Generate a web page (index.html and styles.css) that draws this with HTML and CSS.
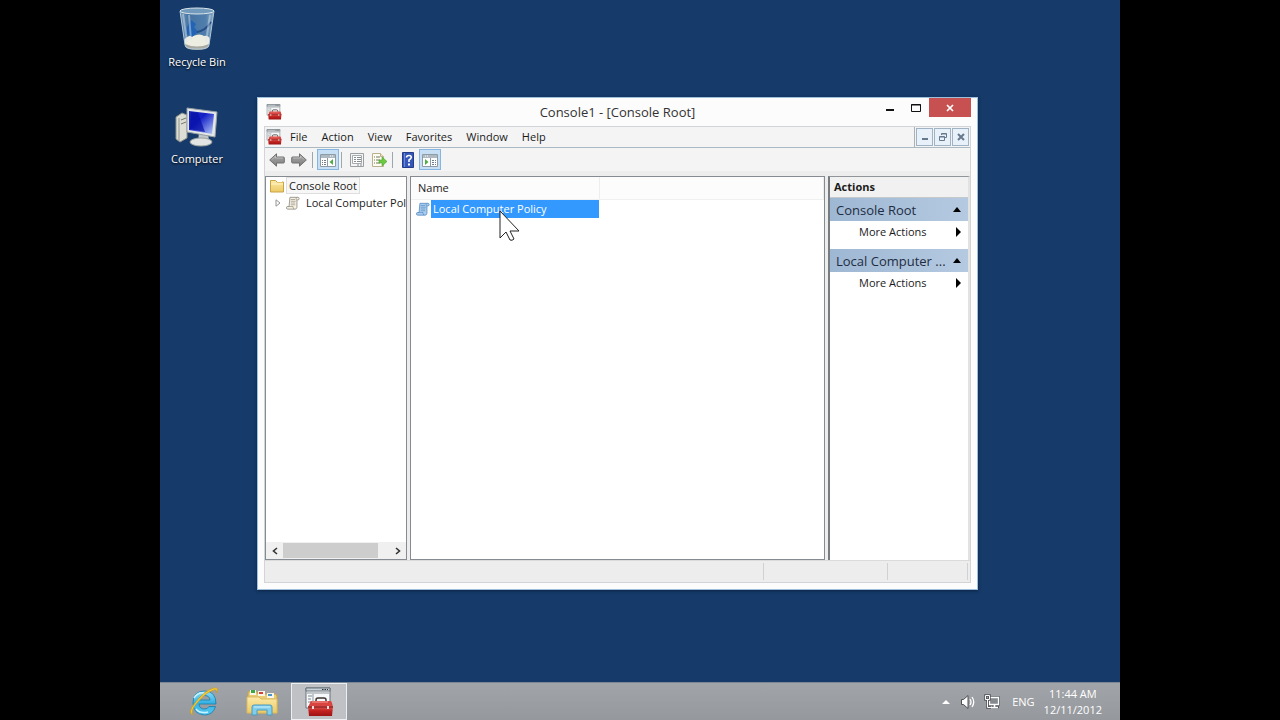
FILE: index.html
```html
<!DOCTYPE html>
<html lang="en">
<head>
<meta charset="utf-8">
<title>Console1 - [Console Root]</title>
<link rel="stylesheet" href="styles.css">
</head>
<body>
<svg class="defs" aria-hidden="true">
  <defs>
    <linearGradient id="red" x1="0" y1="0" x2="0" y2="1"><stop offset="0" stop-color="#e0625c"/><stop offset=".5" stop-color="#c2201f"/><stop offset="1" stop-color="#9c1414"/></linearGradient>
    <linearGradient id="glass" x1="0" y1="0" x2="1" y2="0"><stop offset="0" stop-color="#8fb1cd"/><stop offset=".25" stop-color="#4f80b0"/><stop offset=".75" stop-color="#5f8fbd"/><stop offset="1" stop-color="#a9c6dc"/></linearGradient>
    <linearGradient id="screen" x1="0" y1="0" x2="1" y2="1"><stop offset="0" stop-color="#1b2bb5"/><stop offset=".4" stop-color="#1420c8"/><stop offset="1" stop-color="#b8cdf8"/></linearGradient>
    <linearGradient id="grey" x1="0" y1="0" x2="0" y2="1"><stop offset="0" stop-color="#a8a8a8"/><stop offset="1" stop-color="#808080"/></linearGradient>
    <linearGradient id="yellow" x1="0" y1="0" x2="0" y2="1"><stop offset="0" stop-color="#fbeaa8"/><stop offset="1" stop-color="#ecc964"/></linearGradient>
    <linearGradient id="ie" x1="0" y1="0" x2="0" y2="1"><stop offset="0" stop-color="#8fdcf6"/><stop offset=".5" stop-color="#35b2e4"/><stop offset="1" stop-color="#58c8f0"/></linearGradient>
    <symbol id="toolbox" viewBox="0 0 28 30">
      <path d="M1 1h24v20H1z" fill="#f6f8f9" stroke="#69737a"/>
      <path d="M1 1h24v3H1z" fill="#c9d2d8" stroke="#69737a"/>
      <path d="M17 2.500h6" stroke="#333" stroke-dasharray="1.500 1"/>
      <path d="M2 6h22M8 7v13" stroke="#8b969d"/><path d="M3 9h4M3 12h3M3 15h4" stroke="#7c8890"/>
      <path d="M11 15v-2q0-2 2-2h6q2 0 2 2v2" fill="none" stroke="#3d3535" stroke-width="1.500"/>
      <path d="M5 16q0-2 2-2h18q2 0 2 2l1 4H3z" fill="#d94540"/>
      <path d="M3 19h25l-1 10H4z" fill="url(#red)"/>
      <path d="M3 20h25" stroke="#741010"/><path d="M8 19v3M23 19v3" stroke="#f5dada" stroke-width="2"/><path d="M7 15h16" stroke="#f39b93"/>
    </symbol>
    <symbol id="scroll" viewBox="0 0 16 16">
      <path d="M4.500 1.500h9q1.500 0 1.500 1.500t-1.500 1.500h-1V13q-.5 2-2 2H2q-1.500 0-1.500-1.500T2 12h1.500z" fill="var(--paper)" stroke="var(--edge)"/>
      <path d="M12.500 4.500q-1-.5-1-1.500t1.500-1.500M2 12h6q0 2 1 3M5.500 4h5M5.500 6h5.500M5.500 8h5M5.500 10h5" fill="none" stroke="var(--edge)" stroke-width=".8"/>
    </symbol>
    <symbol id="arrow" viewBox="0 0 16 14"><path d="M.7 7 7.500.8V4h7q.8 0 .8.800v4.400q0 .8-.8.800h-7v3.200z" fill="url(#grey)" stroke="#707070"/><path d="M3 6.500 6.500 3v2h7.500" fill="none" stroke="#c4c4c4" stroke-width=".8"/></symbol>
    <symbol id="panes" viewBox="0 0 16 14">
      <path d="M.5 1.500h15v12H.5z" fill="#fff" stroke="#8c9ba6"/><path d="M1 2h14v3H1z" fill="#aeb9c1"/><path d="M10 3h4" stroke="#fff" stroke-dasharray="1 1"/><path d="M7.500 5v8" stroke="#8c9ba6"/>
      <path d="M2 7.500h4M2 9.500h4M2 11.500h4" stroke="#6e7f8b" stroke-dasharray="1 1 2"/><path d="M13 6v6L9.500 9z" fill="#4fae43"/>
    </symbol>
  </defs>
</svg>

<main class="desktop">
  <div class="workspace">
    <nav class="shortcuts" aria-label="Desktop">
      <button class="shortcut">
        <svg width="48" height="48" viewBox="0 0 48 48" aria-hidden="true">
          <path d="M7 4 12 39q0 4 12 4t12-4L41 4z" fill="url(#glass)" fill-opacity=".8"/>
          <path d="M11 34q4-5 9-4 7-3 11 0 4-1 6 3l-1 6q-1 4-12 4t-12-4z" fill="#eeede2"/>
          <path d="M12 38q12 5 24 0v2q-1 4-12 4t-12-4z" fill="#a9a9a2"/>
          <path d="M14 21l4-7 5 4-2 3 4 5-6 5-5-3z" fill="#2263b5"/><path d="M24 26q8-1 14-10" fill="none" stroke="#284e87" stroke-width="2"/>
          <path d="M10 8 14 36M16 9l2 25M37 9l-4 27" stroke="#d6e5f0" stroke-opacity=".45" stroke-width="2"/>
          <ellipse cx="24" cy="5" rx="17" ry="3" fill="#719abc" stroke="#dce6ea"/>
          <path d="m7 5 5 34q0 4 12 4t12-4l5-34" fill="none" stroke="#b1c8d8"/>
        </svg>
        <span>Recycle Bin</span>
      </button>
      <button class="shortcut">
        <svg width="48" height="48" viewBox="0 0 48 48" aria-hidden="true">
          <path d="m3 14 6-4 5 2v23l-7 4-4-3z" fill="#dcddd5" stroke="#8e938f"/><path d="m6 15v23" stroke="#929790"/><path d="M8 17l5-2M8 21l5-2" stroke="#77796f"/>
          <path d="M26 30h9l1 8H25z" fill="#bfc4c5"/><ellipse cx="28" cy="39" rx="11" ry="4" fill="#e1e4e2" stroke="#9ca2a3"/>
          <path d="m14 5 30 4-2 25-28-5z" fill="#e4e7e7" stroke="#979fa4"/>
          <path d="m16 8 25 3-2 20-23-4z" fill="url(#screen)"/><path d="m18 9 7 1 7 19-15-3z" fill="#0710a5" fill-opacity=".7"/>
        </svg>
        <span>Computer</span>
      </button>
    </nav>

    <section class="window" aria-label="Console1">
      <header class="titlebar">
        <svg class="app-icon" aria-hidden="true"><use href="#toolbox"/></svg>
        <h1>Console1 - [Console Root]</h1>
        <div class="caption-buttons">
          <button aria-label="Minimize"><svg width="10" height="10" aria-hidden="true"><path d="M1 6h8v2H1z" fill="#111"/></svg></button>
          <button aria-label="Maximize"><svg width="10" height="10" aria-hidden="true"><path d="M.5 1.500h9v7h-9zM0 2h10" fill="none" stroke="#111"/></svg></button>
          <button class="close" aria-label="Close"><svg width="10" height="10" aria-hidden="true"><path d="m2 2 6 6m0-6L2 8" stroke="#fff" stroke-width="1.700"/></svg></button>
        </div>
      </header>

      <div class="frame">
        <div class="menubar">
          <svg class="app-icon" aria-hidden="true"><use href="#toolbox"/></svg>
          <nav class="menus" aria-label="Menu">
            <button>File</button><button>Action</button><button>View</button><button>Favorites</button><button>Window</button><button>Help</button>
          </nav>
          <div class="child-buttons">
            <button aria-label="Minimize console"><svg width="10" height="10" aria-hidden="true"><path d="M2 6h6v2H2z" fill="#66798d"/></svg></button>
            <button aria-label="Restore console"><svg width="10" height="10" aria-hidden="true"><path d="M3.500 3V1.500h5v4H7M1.500 4.500h5v4h-5zM1.500 5h5M3.500 2h5" fill="none" stroke="#66798d"/></svg></button>
            <button aria-label="Close console"><svg width="10" height="10" aria-hidden="true"><path d="m2 2 6 6m0-6L2 8" stroke="#66798d" stroke-width="2"/></svg></button>
          </div>
        </div>

        <div class="toolbar">
          <button class="tool" aria-label="Back"><svg width="16" height="14" aria-hidden="true"><use href="#arrow"/></svg></button>
          <button class="tool" aria-label="Forward"><svg class="flip" width="16" height="14" aria-hidden="true"><use href="#arrow"/></svg></button>
          <span class="divider"></span>
          <button class="tool pressed" aria-label="Show/Hide Console Tree"><svg width="16" height="14" aria-hidden="true"><use href="#panes"/></svg></button>
          <span class="divider"></span>
          <button class="tool" aria-label="Properties"><svg width="16" height="16" viewBox="0 0 16 16" aria-hidden="true"><path d="M1.500 1.500h13v13h-13z" fill="#f5f5f5" stroke="#9a9fa2"/><path d="M3.500 3.500h9v8h-9z" fill="#fff" stroke="#a5abae"/><path d="M5 5.500h2m1 0h4M5 7.500h2m1 0h4M5 9.500h2m1 0h4M8 13h2m1 0h2" stroke="#858d91"/></svg></button>
          <button class="tool" aria-label="Export List"><svg width="16" height="16" viewBox="0 0 16 16" aria-hidden="true"><path d="M1.500 1.500h8l3 3v10h-11z" fill="#fffdf1" stroke="#b9b18d"/><path d="M9.500 1.500v3h3" fill="#eee5bd" stroke="#b9b18d"/><path d="M3 5h1m1 0h4M3 8h1m1 0h4M3 11h1m1 0h4" stroke="#6d7665"/><path d="M8 8h3V5l5 4.500-5 4.500v-3H8z" fill="#6cc941" stroke="#4ea42b" stroke-width=".6"/></svg></button>
          <span class="divider"></span>
          <button class="tool" aria-label="Help"><svg width="16" height="16" viewBox="0 0 16 16" aria-hidden="true"><path d="M2.500.5h11v15h-11z" fill="#3557b7" stroke="#243c8b"/><path d="M4.500 1v14" stroke="#6d89dc"/><path d="M6.500 5.500Q6.500 3.500 9 3.500t2.200 2.200Q11 7 9 8v2" fill="none" stroke="#fff" stroke-width="1.600"/><path d="M8 11.500h2v2H8z" fill="#fff"/></svg></button>
          <button class="tool pressed" aria-label="Show/Hide Action Pane"><svg class="flip" width="16" height="14" aria-hidden="true"><use href="#panes"/></svg></button>
        </div>

        <div class="panes">
          <aside class="tree">
            <ul>
              <li class="root"><svg width="16" height="16" viewBox="0 0 16 16" aria-hidden="true"><path d="M1.500 4V2.500h5L8 4h6.500v10h-13z" fill="url(#yellow)" stroke="#c9a444"/><path d="M2 6h12" stroke="#fff4c5"/><path d="M8 3h5v1H8" fill="#fff"/></svg><button class="node selected">Console Root</button></li>
              <li class="child"><button class="expander" aria-label="Expand"><svg width="6" height="8" aria-hidden="true"><path d="M1 .8 5 4 1 7.200z" fill="#fff" stroke="#949494"/></svg></button><svg class="scroll-icon" width="14" height="14" aria-hidden="true"><use href="#scroll"/></svg><button class="node">Local Computer Policy</button></li>
            </ul>
            <div class="hscroll">
              <button aria-label="Scroll left"><svg width="8" height="8" aria-hidden="true"><path d="M6 1 2.500 4 6 7" fill="none" stroke="#333" stroke-width="1.600"/></svg></button>
              <div class="track"><div class="thumb"></div></div>
              <button aria-label="Scroll right"><svg width="8" height="8" aria-hidden="true"><path d="m2 1 3.500 3L2 7" fill="none" stroke="#333" stroke-width="1.600"/></svg></button>
            </div>
          </aside>

          <section class="list" aria-label="Items">
            <table>
              <thead><tr><th class="name-col">Name</th><th aria-label="Unused"></th></tr></thead>
              <tbody><tr><td><div class="item"><svg class="scroll-icon blue" width="14" height="14" aria-hidden="true"><use href="#scroll"/></svg><span>Local Computer Policy</span></div></td><td></td></tr></tbody>
            </table>
          </section>

          <aside class="actions">
            <h2>Actions</h2>
            <button class="group"><span>Console Root</span><svg width="8" height="5" aria-hidden="true"><path d="M0 5 4 0l4 5z"/></svg></button>
            <button class="more"><span>More Actions</span><svg width="5" height="10" aria-hidden="true"><path d="m0 0 5 5-5 5z"/></svg></button>
            <button class="group"><span>Local Computer ...</span><svg width="8" height="5" aria-hidden="true"><path d="M0 5 4 0l4 5z"/></svg></button>
            <button class="more"><span>More Actions</span><svg width="5" height="10" aria-hidden="true"><path d="m0 0 5 5-5 5z"/></svg></button>
          </aside>
        </div>
        <footer class="status"><span></span><span></span><span></span></footer>
      </div>
    </section>

    <svg class="pointer" width="21" height="32" viewBox="0 0 21 32" aria-hidden="true"><path d="M1 1v27l6-6 4 8q2 1 4-1l-4-8h9z" fill="#fff" stroke="#222" stroke-linejoin="round"/></svg>
  </div>

  <footer class="taskbar">
    <div class="apps">
      <button aria-label="Internet Explorer"><svg width="32" height="32" viewBox="0 0 32 32" aria-hidden="true">
        <path d="M28 18H11q.5 5 5.500 5 3 0 4.500-2.500h6.500Q25 29 16.500 29 5 28 5 17 5 5 16.500 5 28 5 28 18zM11 14h11q-.5-4.500-5.500-4.500T11 14z" fill="url(#ie)" stroke="#167dac" stroke-width=".8"/>
        <path d="M6 12q4-6 10-5M8 23q4 5 12 3" fill="none" stroke="#c9f3ff" stroke-width="1.500"/>
        <path d="M5 29Q-1 27 7 17 17 4 26 2q5-1 3 5 0-4-3-3Q18 6 9 17 2 25 5 29z" fill="#f5cd35" stroke="#c99b18" stroke-width=".6"/>
      </svg></button>
      <button aria-label="File Explorer"><svg width="32" height="32" viewBox="0 0 32 32" aria-hidden="true">
        <path d="M2 7q0-2 2-2h6l2 3h17q2 0 2 2v17H2z" fill="#e9cb72" stroke="#c8a24a"/>
        <path d="M4 4h6v5H4zM12 5h7v5h-7zM21 7h7v5h-7z" fill="#f7f5e9"/><path d="M5 4h4v3H5z" fill="#38a847"/><path d="M13 6h4v2h-4z" fill="#d44137"/><path d="M22 8h4v2h-4z" fill="#4892c6"/>
        <path d="M1 11h12l2 2h16v14H1z" fill="url(#yellow)" stroke="#dab965"/>
        <path d="M6 29v-8q0-2 2-2h16q2 0 2 2v8h-5v-5H11v5z" fill="#82cde9" stroke="#4a9cc1"/><path d="M8 21h16" stroke="#c9f2ff"/>
      </svg></button>
      <button class="active" aria-label="Console1"><svg width="28" height="30" aria-hidden="true"><use href="#toolbox"/></svg></button>
    </div>
    <div class="tray">
      <button aria-label="Show hidden icons"><svg width="8" height="5" aria-hidden="true"><path d="M0 5 4 1l4 4z" fill="#fff"/></svg></button>
      <button class="volume" aria-label="Volume"><svg width="16" height="16" viewBox="0 0 16 16" aria-hidden="true"><path d="M1.500 5.500h2L8 1.500v13l-4.500-4h-2z" fill="#fff" stroke="#4d5053"/><path d="M10 5q2 3 0 6M12 3q3.500 5 0 10" fill="none" stroke="#fff" stroke-width="1.300"/></svg></button>
      <button aria-label="Network"><svg width="16" height="16" viewBox="0 0 16 16" aria-hidden="true"><path d="M5.500 3.500h9v7h-9zM8 13h7M10.500 11v2" fill="none" stroke="#505458" stroke-width="2.500"/><path d="M5.500 3.500h9v7h-9z" fill="#85898d" stroke="#fff" stroke-width="1.300"/><path d="M7 13.500h7M10.500 11v2" stroke="#fff" stroke-width="1.500"/><path d="M1.500 1.500h4v4h-4zM3.500 6v7.500H7" fill="none" stroke="#505458" stroke-width="2.500"/><path d="M1.500 1.500h4v4h-4zM3.500 6v7.500H7" fill="none" stroke="#fff"/></svg></button>
      <button class="language">ENG</button>
      <button class="clock"><time>11:44 AM</time><span>12/11/2012</span></button>
    </div>
  </footer>
</main>
</body>
</html>
```

FILE: styles.css
```css
* { box-sizing: border-box; }
body {
  margin: 0;
  background: #000;
  color: #1b1b1b;
  font: 11px/16px "Open Sans", "Noto Sans", sans-serif;
}
button {
  margin: 0;
  padding: 0;
  border: 0;
  background: none;
  color: inherit;
  font: inherit;
}
svg { display: block; flex: none; }
h1, h2, ul { margin: 0; padding: 0; font: inherit; }
.defs { position: absolute; width: 0; height: 0; }
.flip { transform: scaleX(-1); }

.desktop {
  display: flex;
  flex-direction: column;
  width: 75%;
  min-height: 100vh;
  margin: 0 auto;
  background: #163a69;
}
.workspace { position: relative; flex: 1; }
.shortcuts {
  display: flex;
  flex-direction: column;
  align-items: flex-start;
  gap: 33px;
  padding: 6px 0;
}
.shortcut {
  display: flex;
  flex-direction: column;
  align-items: center;
  width: 74px;
  color: #fff;
  text-shadow: 0 1px 2px #000;
}

.window {
  position: absolute;
  top: 97px;
  left: 97px;
  right: 142px;
  display: flex;
  flex-direction: column;
  height: 493px;
  padding: 0 6px 6px;
  border: 1px solid #9fc0dd;
  background: #fcfcfc;
  box-shadow: 0 1px 3px #0b2445;
}
.titlebar {
  display: grid;
  grid-template-columns: 104px 1fr 104px;
  height: 28px;
}
.app-icon { width: 16px; height: 16px; }
.titlebar .app-icon { margin: 6px 2px; }
.titlebar h1 {
  padding-top: 4px;
  font-size: 13px;
  line-height: 20px;
  text-align: center;
  color: #333;
}
.caption-buttons { display: flex; justify-content: flex-end; height: 19px; }
.caption-buttons button { display: grid; place-items: center; width: 26px; }
.caption-buttons .close { width: 42px; background: #c75050; }

.frame {
  display: flex;
  flex: 1;
  flex-direction: column;
  min-height: 0;
  border: 1px solid #d2d5d8;
  background: #ededed;
}
.menubar {
  display: flex;
  align-items: center;
  height: 21px;
  padding-left: 1px;
  border-bottom: 1px solid #aab9c3;
  background: #f4f4f4;
}
.menus { display: flex; flex: 1; padding-left: 1px; }
.menus button { padding: 0 7px; }
.child-buttons {
  display: flex;
  gap: 1px;
  height: 21px;
  padding: 1px;
  border-left: 1px solid #aab2b8;
}
.child-buttons button {
  display: grid;
  place-items: center;
  width: 17px;
  height: 18px;
  border: 1px solid #9fb3c5;
  background: #e8f1f9;
}
.toolbar {
  display: flex;
  align-items: center;
  height: 23px;
  padding-left: 1px;
  background: #f4f4f4;
}
.tool { display: grid; place-items: center; width: 22px; height: 21px; }
.pressed { border: 1px solid #86b6df; background: #c6dff5; }
.divider { width: 1px; height: 16px; margin: 0 4px 0 2px; background: #9ca7af; }

.panes {
  display: grid;
  grid-template-columns: 142px minmax(0, 1fr) 142px;
  gap: 3px;
  flex: 1;
  min-height: 0;
  padding-top: 5px;
}
.tree, .list { border: 1px solid #858b90; background: #fff; }
.tree { display: flex; flex-direction: column; min-width: 0; overflow: hidden; }
.tree ul { flex: 1; overflow: hidden; list-style: none; }
.tree li { display: flex; align-items: center; height: 17px; }
.root { padding-left: 3px; }
.root .node { margin-left: 1px; }
.child { gap: 5px; padding-left: 9px; }
.child .node { padding: 0; }
.node { flex: none; padding: 0 2px; border: 1px solid transparent; line-height: 15px; white-space: nowrap; }
.selected { border-color: #dedede; background: #f7f7f7; }
.expander { display: grid; place-items: center; width: 8px; height: 16px; }
.scroll-icon { --paper: #f6f1df; --edge: #92908a; }
.blue { --paper: #a9ccef; --edge: #5d91c5; }
.hscroll { display: flex; height: 17px; padding: 1px 0; background: #f0f0f0; }
.hscroll button { display: grid; place-items: center; width: 17px; }
.track { flex: 1; }
.thumb { width: 90%; height: 15px; background: #cdcdcd; }

table { width: 100%; border-collapse: collapse; table-layout: fixed; }
th { height: 22px; padding: 1px 7px; border-right: 1px solid #eee; border-bottom: 1px solid #f0f0f0; background: #fcfcfc; font-weight: 400; text-align: left; }
.name-col { width: 188px; }
td { padding: 0; }
.item { display: flex; align-items: center; gap: 1px; height: 18px; padding-left: 5px; }
.item span { flex: 1; padding-left: 2px; background: #3399ff; color: #fff; line-height: 18px; }

.actions { border-left: 2px solid #777c80; border-right: 2px solid #e2e2e2; border-top: 1px solid #909599; background: #fff; }
.actions h2 { height: 21px; padding: 2px 4px; border-bottom: 1px solid #c5c9cc; background: #f1f1f1; font-weight: 700; }
.group, .more { display: flex; align-items: center; justify-content: space-between; width: 100%; padding: 0 7px 0 6px; }
.group { height: 23px; background: linear-gradient(90deg, #9eb7d3, #b5cae1); color: #1f2d42; font-size: 13px; white-space: nowrap; }
.more { height: 22px; margin-bottom: 6px; padding-left: 29px; }

.status { display: grid; grid-template-columns: 1fr 124px 80px; height: 22px; padding: 2px 2px 2px 0; border-top: 1px solid #dadada; }
.status span { border-right: 1px solid #cfd2d4; }
.pointer { position: absolute; top: 210px; left: 339px; }

.taskbar {
  display: flex;
  justify-content: space-between;
  height: 38px;
  border-top: 1px solid #7c8796;
  background: linear-gradient(#a1a4a8, #95989d);
}
.apps { display: flex; padding-left: 15px; }
.apps button { display: grid; place-items: center; width: 58px; }
.apps .active { width: 56px; border: 1px solid #edf0f2; background: #bfc1c4; }
.tray { display: flex; align-items: center; gap: 8px; padding-right: 18px; color: #fff; }
.volume { margin-left: 2px; }
.language { margin: 0 1px 0 4px; }
.clock { display: grid; text-align: center; }
```
